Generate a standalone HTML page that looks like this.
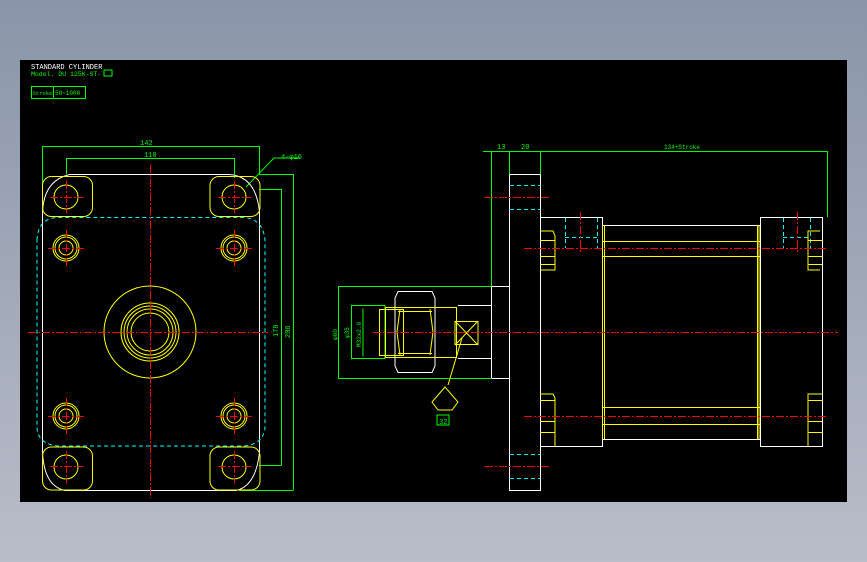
<!DOCTYPE html>
<html><head><style>
html,body{margin:0;padding:0;width:867px;height:562px;overflow:hidden;background:linear-gradient(#8995a8,#b9bdc9);}
svg{position:absolute;left:0;top:0}
text{font-family:"Liberation Mono",monospace;}
</style></head><body>
<svg width="867" height="562" viewBox="0 0 867 562" fill="none" stroke-width="1">
<rect x="20" y="60" width="827" height="442" fill="#000"/>
<!-- title -->
<text x="31" y="69" fill="#fff" font-size="7">STANDARD CYLINDER</text>
<text x="31" y="76" fill="#0f0" font-size="6.5">Model. DU 125K-ST-</text>
<rect x="104" y="70" width="8" height="6" stroke="#0f0"/>
<rect x="31.5" y="86.5" width="54" height="12" stroke="#0f0"/>
<line x1="53.5" y1="86" x2="53.5" y2="99" stroke="#0f0"/>
<text x="32.5" y="95" fill="#0f0" font-size="5.5">Stroke</text>
<text x="55" y="95" fill="#0f0" font-size="6">50~1000</text>

<!-- LEFT VIEW -->
<g stroke="#0f0">
<path d="M42.5 215V146.5H259.5V174"/>
<path d="M66.5 174V158.5H234.5V178"/>
<path d="M259 189.5H281.5V465M259 174.5H293.5V490"/>
<path d="M259 465.5H281.5M239 490.5H293.5"/>
<path d="M246 187L274 158H300"/>
</g>
<text x="140" y="145" fill="#0f0" font-size="7">142</text>
<text x="144" y="157" fill="#0f0" font-size="7">110</text>
<text x="281" y="159" fill="#0f0" font-size="7">4-φ16</text>
<text transform="translate(278,337) rotate(-90)" fill="#0f0" font-size="7">178</text>
<text transform="translate(290,338) rotate(-90)" fill="#0f0" font-size="7">206</text>

<path d="M42.5 212 Q44 180 70 174.5H229 Q256 176 259.5 212V452 Q256 486 236 490.5H65 Q44 486 42.5 452Z" stroke="#fff"/>
<path d="M37 240 Q38 218 58 217.5H244 Q263 219 265 240V428 Q263 444 245 446H58 Q38 444 37 428Z" stroke="#0ff" stroke-dasharray="4,3"/>
<g stroke="#ff0">
<rect x="42.5" y="176.5" width="50" height="40" rx="9"/>
<rect x="210" y="176.5" width="50" height="40" rx="9"/>
<rect x="42.5" y="447" width="50" height="43" rx="9"/>
<rect x="210" y="447" width="50" height="43" rx="9"/>
<circle cx="66" cy="197" r="12"/><circle cx="234" cy="197" r="12"/>
<circle cx="66" cy="467" r="12"/><circle cx="234" cy="467" r="12"/>
<circle cx="66" cy="248" r="13"/><circle cx="66" cy="248" r="11"/><circle cx="66" cy="248" r="7"/>
<circle cx="234" cy="248" r="13"/><circle cx="234" cy="248" r="11"/><circle cx="234" cy="248" r="7"/>
<circle cx="66" cy="416" r="13"/><circle cx="66" cy="416" r="11"/><circle cx="66" cy="416" r="7"/>
<circle cx="234" cy="416" r="13"/><circle cx="234" cy="416" r="11"/><circle cx="234" cy="416" r="7"/>
<circle cx="150" cy="332" r="46"/>
<circle cx="150" cy="332" r="29"/><circle cx="150" cy="332" r="26"/><circle cx="150" cy="332" r="23"/><circle cx="150" cy="332" r="19"/>
</g>
<g stroke="#f00" stroke-dasharray="8,2,2,2">
<line x1="150.5" y1="165" x2="150.5" y2="498"/>
<line x1="28" y1="332.5" x2="268" y2="332.5"/>
<line x1="50" y1="197.5" x2="83" y2="197.5"/><line x1="66.5" y1="181" x2="66.5" y2="213"/>
<line x1="218" y1="197.5" x2="251" y2="197.5"/><line x1="234.5" y1="181" x2="234.5" y2="213"/>
<line x1="50" y1="466.5" x2="83" y2="466.5"/><line x1="66.5" y1="451" x2="66.5" y2="483"/>
<line x1="218" y1="466.5" x2="251" y2="466.5"/><line x1="234.5" y1="451" x2="234.5" y2="483"/>
<line x1="48" y1="248.5" x2="85" y2="248.5"/><line x1="66.5" y1="230" x2="66.5" y2="266"/>
<line x1="216" y1="248.5" x2="253" y2="248.5"/><line x1="234.5" y1="230" x2="234.5" y2="266"/>
<line x1="48" y1="416.5" x2="85" y2="416.5"/><line x1="66.5" y1="398" x2="66.5" y2="434"/>
<line x1="216" y1="416.5" x2="253" y2="416.5"/><line x1="234.5" y1="398" x2="234.5" y2="434"/>
</g>

<!-- RIGHT VIEW -->
<g stroke="#0f0">
<path d="M483 151.5H827.5V217"/>
<path d="M491.5 151V286M509.5 151V174M540.5 151V174"/>
<path d="M491 286.5H338.5V378.5H491"/>
<path d="M358 305.5H351.5V358.5H358M358 305.5H385V358.5H358"/>
<path d="M363 308.5V356.5"/>
<rect x="437" y="415" width="12" height="10"/>
</g>
<text x="497" y="149" fill="#0f0" font-size="7">13</text>
<text x="521" y="149" fill="#0f0" font-size="7">20</text>
<text x="664" y="149" fill="#0f0" font-size="6">134+Stroke</text>
<text transform="translate(337,340) rotate(-90)" fill="#0f0" font-size="6">φ60</text>
<text transform="translate(349,338) rotate(-90)" fill="#0f0" font-size="6">φ35</text>
<text transform="translate(361,347) rotate(-90)" fill="#0f0" font-size="6">M32x2.0</text>
<text x="439" y="424" fill="#0f0" font-size="7">32</text>

<g stroke="#fff">
<rect x="509.5" y="174.5" width="31" height="316"/>
<rect x="540.5" y="217.5" width="62" height="229"/>
<rect x="760.5" y="217.5" width="62" height="229"/>
<path d="M602 225.5H760M602 439.5H760"/>
<path d="M491.5 286.5H509M491.5 378.5H509M491.5 286V378"/>
<path d="M458 305.5H491M458 358.5H491"/>
<path d="M398 291.5H432L435 298V366L432 372.5H398L395 366V298Z"/>
</g>
<g stroke="#0ff" stroke-dasharray="4,3">
<line x1="510" y1="185.5" x2="540" y2="185.5"/><line x1="510" y1="209.5" x2="540" y2="209.5"/>
<line x1="510" y1="454.5" x2="540" y2="454.5"/><line x1="510" y1="478.5" x2="540" y2="478.5"/>
<path d="M565.5 218V248M597.5 218V248M565 237.5H597"/>
<path d="M783.5 218V248M810.5 218V248M783 237.5H810"/>
</g>
<g stroke="#ff0">
<path d="M602.5 225V439M604.5 225V439M757.5 225V439M759 225V439"/>
<path d="M602 241.5H760M602 256.5H760M602 407.5H760M602 424.5H760"/>
<path d="M540 231H553L555 236V270H540M540 240.5H555M540 256.5H555M540 264.5H555"/>
<path d="M540 394H553L555 398V446M540 400.5H555M540 421.5H555M540 432.5H555"/>
<path d="M820 231H808V270H820M808 240.5H822M808 256.5H822M808 264.5H822"/>
<path d="M822 394H808V446M808 400.5H822M808 421.5H822M808 432.5H822"/>
<rect x="379.5" y="309.5" width="24" height="46"/>
<rect x="385.5" y="307.5" width="71" height="50"/>
<path d="M400 309L397 332L400 355M430 309L433 332L430 355M398 311.5H432M398 353.5H432"/>
<path d="M455 321.5H478V344.5H455ZM455 321L478 345M478 321L455 345"/>
<path d="M462 338L448 385M445 387L432 402L438 410H452L458 402Z"/>
</g>
<g stroke="#f00" stroke-dasharray="8,2,2,2">
<line x1="373" y1="332.5" x2="838" y2="332.5"/>
<line x1="485" y1="197.5" x2="550" y2="197.5"/>
<line x1="485" y1="466.5" x2="550" y2="466.5"/>
<line x1="524" y1="248.5" x2="828" y2="248.5"/>
<line x1="524" y1="416.5" x2="828" y2="416.5"/>
<line x1="580.5" y1="212" x2="580.5" y2="254"/>
<line x1="797.5" y1="212" x2="797.5" y2="254"/>
</g>
</svg>
</body></html>
